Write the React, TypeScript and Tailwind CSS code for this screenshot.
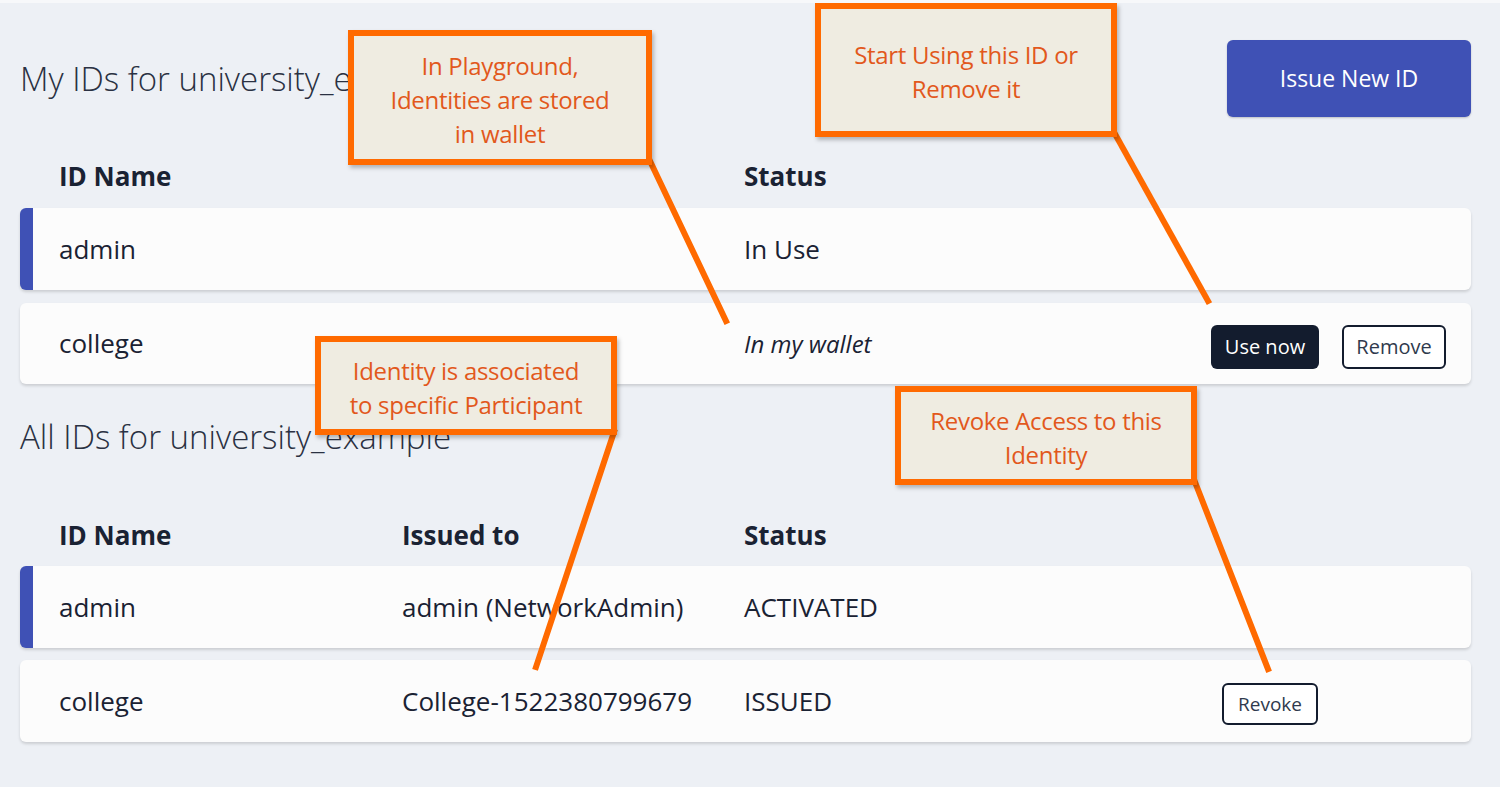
import React from "react";

type Callout = {
  box: string;
  lines: string[];
};

function Note({ box, lines }: Callout) {
  return (
    <div
      className={`absolute ${box} flex flex-col items-center justify-center border-[6px] border-[#ff6a00] bg-[#efece1] pt-[4px] text-center font-['Open_Sans'] text-[24px] leading-[34px] text-[#e2581c] shadow-[2px_3px_4px_rgba(0,0,0,0.25)]`}
    >
      {lines.map((l) => (
        <span key={l} className="whitespace-nowrap tracking-[-0.3px]">
          {l}
        </span>
      ))}
    </div>
  );
}

function OutlineButton({ label, className }: { label: string; className: string }) {
  return (
    <button
      className={`flex items-center justify-center rounded-[6px] border-2 border-[#131c2e] bg-white text-[#2f3a4d] ${className}`}
    >
      {label}
    </button>
  );
}

export default function App() {
  return (
    <div className="relative h-[787px] w-full overflow-hidden border-t-[3px] border-[#f7f8fa] bg-[#edf0f5] font-['Open_Sans'] text-[#1a2233]">
      <div className="pl-[20px] pr-[29px]">
        {/* my ids */}
        <div className="mt-[37px] flex items-center justify-between">
          <h2 className="text-[33px] font-light leading-[40px] text-[#2a3142]">My IDs for university_example</h2>
          <button className="flex h-[77px] w-[244px] items-center justify-center rounded-[6px] bg-[#3f51b5] text-[23px] text-white shadow-[0_1px_2px_rgba(0,0,0,0.2)]">
            Issue New ID
          </button>
        </div>

        <div className="mt-[27px] flex h-[64px] items-center pl-[39px] text-[26px] font-bold">
          <div className="w-[685px]">ID Name</div>
          <div>Status</div>
        </div>

        <div className="flex flex-col gap-[13px]">
          <div className="flex h-[82px] items-center rounded-[6px] border-l-[13px] border-[#3f51b5] bg-[#fcfcfc] pl-[26px] text-[26px] shadow-[0_2px_3px_rgba(0,0,0,0.14)]">
            <div className="w-[685px]">admin</div>
            <div>In Use</div>
          </div>
          <div className="flex h-[81px] items-center rounded-[6px] bg-[#fcfcfc] pl-[39px] pr-[25px] text-[26px] shadow-[0_2px_3px_rgba(0,0,0,0.14)]">
            <div className="w-[685px]">college</div>
            <div className="text-[24px] italic">In my wallet</div>
            <div className="ml-auto mt-[6px] flex gap-[23px]">
              <button className="flex h-[44px] w-[108px] items-center justify-center rounded-[6px] bg-[#131c2e] text-[20px] text-white">
                Use now
              </button>
              <OutlineButton label="Remove" className="h-[44px] w-[104px] text-[20px]" />
            </div>
          </div>
        </div>

        {/* all ids */}
        <h2 className="mt-[33px] text-[33px] font-light leading-[40px] text-[#2a3142]">All IDs for university_example</h2>

        <div className="mt-[47px] flex h-[62px] items-center pl-[39px] text-[26px] font-bold">
          <div className="w-[343px]">ID Name</div>
          <div className="w-[342px]">Issued to</div>
          <div>Status</div>
        </div>

        <div className="flex flex-col gap-[12px]">
          <div className="flex h-[82px] items-center rounded-[6px] border-l-[13px] border-[#3f51b5] bg-[#fcfcfc] pl-[26px] text-[26px] shadow-[0_2px_3px_rgba(0,0,0,0.14)]">
            <div className="w-[343px]">admin</div>
            <div className="w-[342px]">admin (NetworkAdmin)</div>
            <div>ACTIVATED</div>
          </div>
          <div className="flex h-[82px] items-center rounded-[6px] bg-[#fcfcfc] pl-[39px] pr-[153px] text-[26px] shadow-[0_2px_3px_rgba(0,0,0,0.14)]">
            <div className="w-[343px]">college</div>
            <div className="w-[342px]">College-1522380799679</div>
            <div>ISSUED</div>
            <OutlineButton label="Revoke" className="ml-auto mt-[6px] h-[42px] w-[96px] text-[19px]" />
          </div>
        </div>
      </div>

      {/* annotations */}
      <svg className="pointer-events-none absolute left-0 top-[-3px]" width="1500" height="787" viewBox="0 0 1500 787">
        <g stroke="#ff6a00" strokeWidth="6" strokeLinecap="square" fill="none">
          <line x1="650" y1="161" x2="726" y2="321" />
          <line x1="1115" y1="134" x2="1208" y2="301" />
          <line x1="614" y1="432" x2="536" y2="667" />
          <line x1="1195" y1="482" x2="1268" y2="669" />
        </g>
      </svg>

      <Note box="left-[348px] top-[27px] h-[135px] w-[304px]" lines={["In Playground,", "Identities are stored", "in wallet"]} />
      <Note box="left-[815px] top-[0px] h-[134px] w-[302px]" lines={["Start Using this ID or", "Remove it"]} />
      <Note box="left-[315px] top-[333px] h-[99px] w-[302px]" lines={["Identity is associated", "to specific Participant"]} />
      <Note box="left-[895px] top-[383px] h-[99px] w-[302px]" lines={["Revoke Access to this", "Identity"]} />
    </div>
  );
}
